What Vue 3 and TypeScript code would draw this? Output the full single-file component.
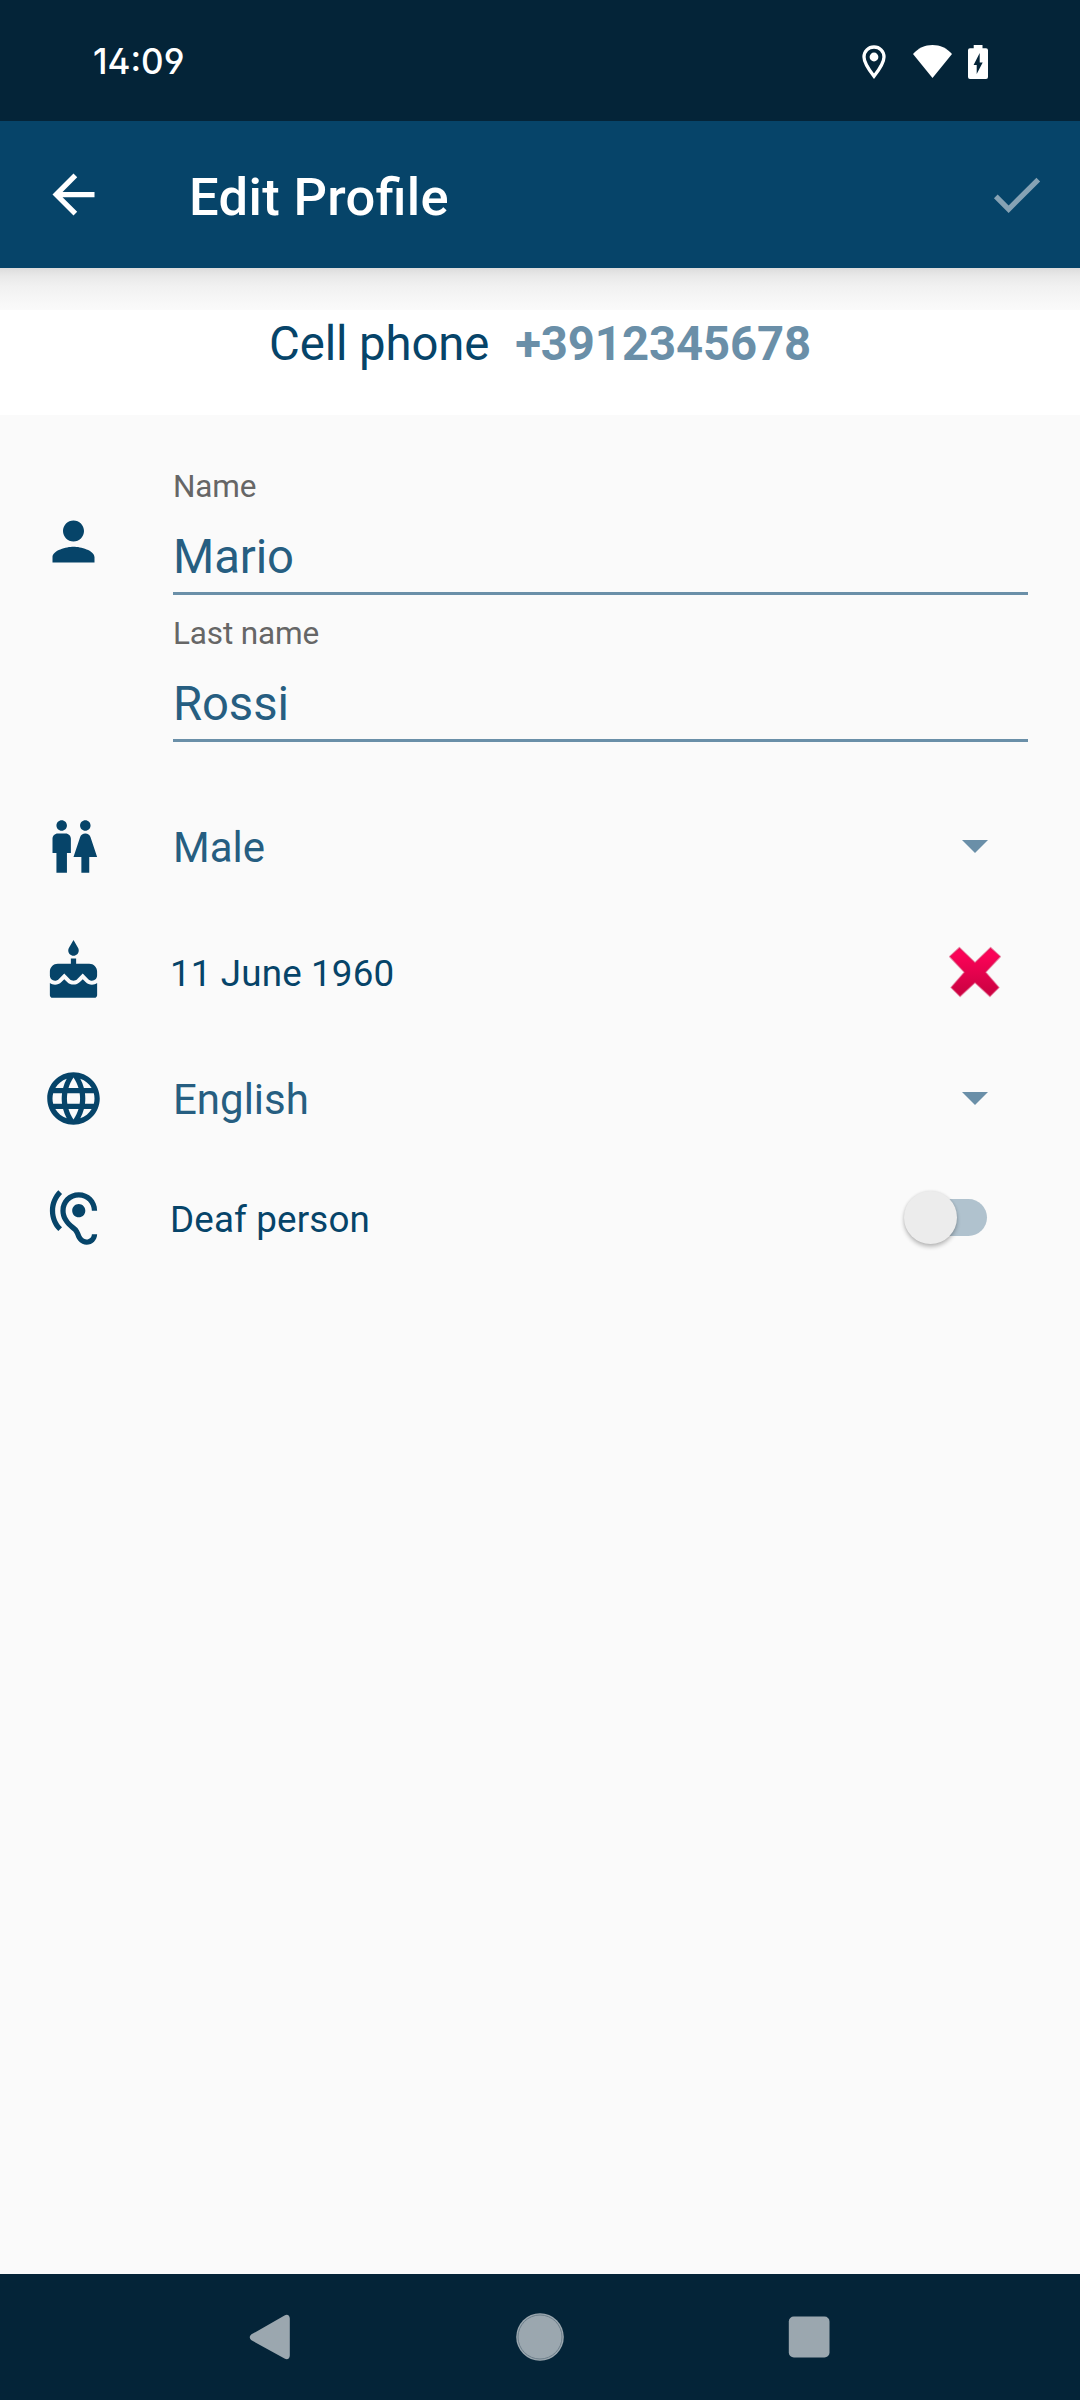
<script setup lang="ts">
import { ref } from 'vue'

interface NameField {
  label: string
  value: string
}

const phone = ref<string>('+3912345678')
const nameFields = ref<NameField[]>([
  { label: 'Name', value: 'Mario' },
  { label: 'Last name', value: 'Rossi' },
])
const gender = ref<string>('Male')
const birthday = ref<string>('11 June 1960')
const language = ref<string>('English')
const deaf = ref<boolean>(false)
</script>

<template>
  <div class="screen">
    <div class="status">
      <span class="clock">14:09</span>
      <div class="status-icons">
        <svg class="pin" width="24" height="34" viewBox="0 0 24 34">
          <path d="M12 2C6.3 2 2 6.300 2 12c0 6.500 5.500 13.500 10 19.300C16.500 25.500 22 18.500 22 12 22 6.300 17.700 2 12 2z" fill="none" stroke="#fff" stroke-width="3.300" />
          <circle cx="12" cy="12" r="4.400" fill="#fff" />
        </svg>
        <svg class="wifi" width="39" height="33" viewBox="0 0 39 33">
          <path d="M19.500 33L0 9C5 3.200 12 0 19.500 0S34 3.200 39 9z" fill="#fff" />
        </svg>
        <svg width="20" height="34" viewBox="0 0 20 34">
          <path fill-rule="evenodd" d="M5.700 0h8.800v3.200H18a2 2 0 0 1 2 2V32a2 2 0 0 1-2 2H2a2 2 0 0 1-2-2V5.200a2 2 0 0 1 2-2h3.700zM11.700 8L5.600 20h3.100v9l6-11.600h-3z" fill="#fff" />
        </svg>
      </div>
    </div>

    <header class="appbar">
      <svg class="icon" viewBox="0 0 24 24"><path d="M20 11H7.830l5.590-5.590L12 4l-8 8 8 8 1.410-1.410L7.830 13H20v-2z" /></svg>
      <h1>Edit Profile</h1>
      <svg class="icon check" viewBox="0 0 24 24"><path d="M9 16.170L4.830 12l-1.420 1.410L9 19 21 7l-1.410-1.410z" /></svg>
    </header>

    <main>
      <div class="phone">
        <span>Cell phone</span>
        <strong>{{ phone }}</strong>
      </div>

      <section class="names">
        <svg class="icon" viewBox="0 0 24 24"><path d="M12 12c2.210 0 4-1.790 4-4s-1.790-4-4-4-4 1.790-4 4 1.790 4 4 4zm0 2c-2.670 0-8 1.340-8 4v2h16v-2c0-2.660-5.330-4-8-4z" /></svg>
        <div class="fields">
          <div v-for="f in nameFields" :key="f.label" class="field">
            <div class="label">{{ f.label }}</div>
            <div class="value">{{ f.value }}</div>
          </div>
        </div>
      </section>

      <div class="row gender">
        <svg class="icon" viewBox="0 0 24 24"><path d="M5.500 22v-7.500H4V9c0-1.100.9-2 2-2h3c1.100 0 2 .9 2 2v5.500H9.500V22h-4zM18 22v-6h3l-2.540-7.630C18.180 7.550 17.420 7 16.560 7h-.12c-.86 0-1.630.55-1.900 1.370L12 16h3v6h3zM7.500 6c1.110 0 2-.89 2-2s-.89-2-2-2-2 .89-2 2 .89 2 2 2zm9 0c1.110 0 2-.89 2-2s-.89-2-2-2-2 .89-2 2 .89 2 2 2z" /></svg>
        <span class="text select">{{ gender }}</span>
        <svg class="arrow" viewBox="0 0 26 13"><path d="M0 0h26L13 13z" /></svg>
      </div>

      <div class="row birthday">
        <svg class="icon" viewBox="0 0 24 24"><path d="M12 6c1.110 0 2-.9 2-2 0-.38-.1-.73-.29-1.030L12 0l-1.710 2.970c-.19.3-.29.65-.29 1.030 0 1.100.9 2 2 2zm4.600 9.990l-1.070-1.070-1.080 1.070c-1.300 1.300-3.580 1.310-4.890 0l-1.070-1.070-1.090 1.070C6.750 16.640 5.880 17 4.960 17c-.73 0-1.400-.23-1.960-.61V21c0 .55.45 1 1 1h16c.55 0 1-.45 1-1v-4.610c-.56.38-1.230.61-1.960.61-.92 0-1.790-.36-2.440-1.010zM18 9h-5V7h-2v2H6c-1.660 0-3 1.340-3 3v1.540c0 1.080.88 1.960 1.960 1.960.52 0 1.020-.2 1.380-.57l2.140-2.130 2.130 2.130c.74.74 2.030.74 2.770 0l2.140-2.130 2.130 2.130c.37.37.86.57 1.380.57 1.080 0 1.960-.88 1.960-1.960V12C21 10.340 19.660 9 18 9z" /></svg>
        <span class="text">{{ birthday }}</span>
        <svg class="clear" viewBox="0 0 54 52">
          <defs>
            <linearGradient id="clear-fill" x1="0" y1="0" x2="0" y2="1">
              <stop offset="0.150" stop-color="#fb0257" />
              <stop offset="0.900" stop-color="#cd0243" />
            </linearGradient>
          </defs>
          <path d="M11.500 1.700L27 16.700 42.500 1.700 52.200 10.600 37.500 26.300 50.800 41.500 42 50.300 27 36.500 12 50.300 3.200 41.500 16.500 26.300 1.800 10.600z" fill="url(#clear-fill)" stroke="#d8245c" stroke-opacity="0.500" stroke-width="1.600" stroke-linejoin="round" />
        </svg>
      </div>

      <div class="row language">
        <svg class="icon" viewBox="0 0 24 24"><path d="M11.990 2C6.470 2 2 6.480 2 12s4.470 10 9.990 10C17.520 22 22 17.520 22 12S17.520 2 11.990 2zm6.930 6h-2.950c-.32-1.250-.78-2.450-1.380-3.560 1.840.63 3.370 1.910 4.330 3.560zM12 4.040c.83 1.200 1.480 2.530 1.910 3.960h-3.820c.43-1.430 1.080-2.760 1.910-3.960zM4.260 14C4.100 13.360 4 12.690 4 12s.1-1.360.26-2h3.380c-.08.66-.14 1.320-.14 2s.06 1.340.14 2H4.260zm.82 2h2.950c.32 1.250.78 2.450 1.380 3.560-1.840-.63-3.370-1.900-4.330-3.560zm2.950-8H5.080c.96-1.660 2.490-2.930 4.330-3.560C8.810 5.550 8.350 6.750 8.030 8zM12 19.960c-.83-1.200-1.480-2.530-1.910-3.960h3.820c-.43 1.430-1.080 2.760-1.910 3.960zM14.340 14H9.660c-.09-.66-.16-1.320-.16-2s.07-1.350.16-2h4.680c.09.65.16 1.320.16 2s-.07 1.340-.16 2zm.25 5.560c.6-1.110 1.060-2.310 1.380-3.560h2.950c-.96 1.650-2.490 2.930-4.330 3.560zM16.360 14c.08-.66.14-1.320.14-2s-.06-1.340-.14-2h3.380c.16.64.26 1.310.26 2s-.1 1.360-.26 2h-3.380z" /></svg>
        <span class="text select">{{ language }}</span>
        <svg class="arrow" viewBox="0 0 26 13"><path d="M0 0h26L13 13z" /></svg>
      </div>

      <div class="row deaf">
        <svg class="icon" viewBox="0 0 24 24"><path d="M17 20c-.29 0-.56-.06-.76-.15-.71-.37-1.210-.88-1.710-2.380-.51-1.560-1.470-2.290-2.390-3-.79-.61-1.610-1.240-2.320-2.530C9.290 10.980 9 9.930 9 9c0-2.800 2.200-5 5-5s5 2.200 5 5h2c0-3.930-3.070-7-7-7S7 5.070 7 9c0 1.260.38 2.650 1.070 3.900.91 1.650 1.980 2.480 2.850 3.150.81.62 1.390 1.070 1.710 2.050.6 1.820 1.370 2.840 2.730 3.550.51.23 1.070.35 1.640.35 2.210 0 4-1.790 4-4h-2c0 1.100-.9 2-2 2zM7.640 2.640L6.220 1.220C4.230 3.210 3 5.960 3 9s1.230 5.790 3.220 7.780l1.410-1.410C6.010 13.740 5 11.490 5 9s1.010-4.740 2.640-6.360zM11.500 9c0 1.380 1.120 2.500 2.500 2.500s2.500-1.120 2.500-2.500-1.120-2.500-2.500-2.500-2.500 1.120-2.500 2.500z" /></svg>
        <span class="text">Deaf person</span>
        <div class="switch" role="switch" :aria-checked="deaf"><div class="thumb"></div></div>
      </div>
    </main>

    <nav class="navbar">
      <svg width="42" height="46" viewBox="0 0 42 46"><path d="M35.500 1.500c2.500-1.700 5.300-.5 5.300 3v37c0 3.500-2.800 4.700-5.300 3L2.500 26.300c-2.300-1.700-2.300-4.300 0-6z" /></svg>
      <svg width="48" height="48" viewBox="0 0 48 48">
        <circle cx="24" cy="24" r="23.800" />
        <circle class="ring" cx="24" cy="24" r="22" />
      </svg>
      <svg width="42" height="42" viewBox="0 0 42 42"><rect x="0.800" y="0.500" width="40.700" height="41" rx="5" /></svg>
    </nav>
  </div>
</template>

<style>
body {
  margin: 0;
  background: #fafafa;
}
</style>

<style scoped>
.screen {
  width: 1080px;
  height: 2400px;
  display: flex;
  flex-direction: column;
  background: #fafafa;
  color: #064469;
  font-family: Roboto, sans-serif;
  overflow: hidden;
}
svg {
  display: block;
  flex: none;
}
.status {
  height: 121px;
  flex: none;
  box-sizing: border-box;
  padding: 0 92px 0 93px;
  display: flex;
  justify-content: space-between;
  background: #042438;
  color: #fff;
}
.clock {
  font-family: Inter, sans-serif;
  font-weight: 500;
  font-size: 35px;
  line-height: 123px;
  font-feature-settings: 'ss01';
}
.status-icons {
  display: flex;
  align-items: flex-start;
  padding-top: 45px;
}
.pin {
  margin-right: 27px;
}
.wifi {
  margin-right: 16px;
}
.icon {
  width: 63px;
  height: 63px;
  fill: currentColor;
}
.appbar {
  height: 147px;
  flex: none;
  box-sizing: border-box;
  padding: 0 32px 1px 42px;
  display: flex;
  align-items: center;
  background: #064469;
  color: #fff;
}
.appbar h1 {
  flex: 1;
  margin: 0 0 0 84px;
  padding-top: 5px;
  font-size: 52.5px;
  line-height: 70px;
  font-weight: 500;
  letter-spacing: 0.35px;
  font-feature-settings: 'liga' 1;
}
.check {
  color: #86a2b4;
}
main {
  flex: 1;
  padding-top: 42px;
  background: linear-gradient(#dcdcdc, #e9e9e9 8px, #f1f1f1 18px, #f6f6f6 30px, #fafafa 42px) no-repeat 0 0 / 100% 42px;
}
.phone {
  height: 105px;
  box-sizing: border-box;
  display: flex;
  justify-content: center;
  gap: 26px;
  background: #fff;
  font-size: 47.25px;
  line-height: 69px;
  letter-spacing: -0.1px;
}
.phone strong {
  font-weight: 700;
  color: #6a8fa8;
}
.names {
  display: flex;
  padding: 51px 52px 0 42px;
  height: 317px;
}
.names .icon {
  margin-top: 44px;
}
.fields {
  flex: 1;
  margin-left: 68px;
}
.field {
  height: 129px;
  margin-bottom: 18px;
}
.label {
  height: 42px;
  margin-bottom: 14px;
  font-size: 31.5px;
  line-height: 42px;
  letter-spacing: -0.15px;
  color: #666;
}
.value {
  height: 70px;
  font-size: 47.25px;
  line-height: 70px;
  letter-spacing: -0.1px;
  color: #265e81;
  border-bottom: 3px solid #6a8fa8;
}
.row {
  display: flex;
  align-items: center;
  padding: 0 79px 0 42px;
}
.text {
  flex: 1;
  margin-left: 65px;
  padding-top: 3px;
  font-size: 36.75px;
  line-height: 60px;
  letter-spacing: 0.15px;
}
.birthday .text {
  padding-top: 5px;
}
.text.select {
  margin-left: 68px;
  font-size: 42px;
  letter-spacing: 0;
  color: #265e81;
}
.gender {
  height: 126px;
}
.birthday {
  height: 125px;
}
.language {
  height: 128px;
}
.deaf {
  height: 112px;
}
.arrow {
  width: 26px;
  height: 13px;
  margin-right: 13px;
  margin-top: 1px;
  fill: #6a8fa8;
}
.clear {
  width: 54px;
  height: 52px;
  margin-right: -1px;
}
.switch {
  width: 74px;
  height: 37px;
  margin-right: 14px;
  margin-bottom: 1px;
  border-radius: 19px;
  background: #b0c2ce;
  display: flex;
  align-items: center;
}
.thumb {
  flex: none;
  width: 53px;
  height: 53px;
  margin-left: -9px;
  border-radius: 50%;
  background: #ececec;
  box-shadow: 0 3px 4px rgba(0, 0, 0, 0.24), 0 0 3px rgba(0, 0, 0, 0.1);
}
.navbar {
  height: 126px;
  flex: none;
  box-sizing: border-box;
  padding: 0 250px 0 249px;
  display: flex;
  align-items: center;
  justify-content: space-between;
  background: #042438;
  fill: #9ba7af;
}
.ring {
  fill: none;
  stroke: #6d7f8b;
  stroke-width: 1;
}
</style>
